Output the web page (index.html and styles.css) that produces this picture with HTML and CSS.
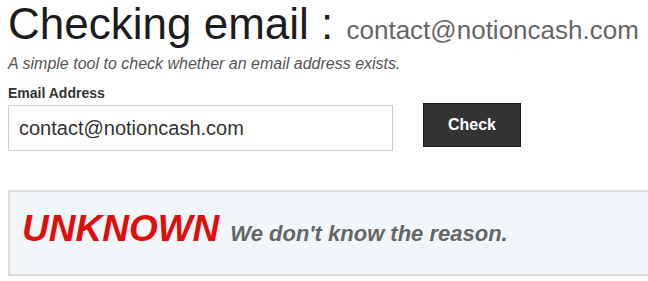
FILE: index.html
```html
<!DOCTYPE html>
<html lang="en">
<head>
<meta charset="utf-8">
<title>Checking email</title>
<link rel="stylesheet" href="styles.css">
</head>
<body>
<div class="page">
  <h1 class="title">Checking email : <span class="title-email">contact@notioncash.com</span></h1>
  <p class="subtitle">A simple tool to check whether an email address exists.</p>
  <form class="check-form">
    <label class="field-label" for="email">Email Address</label>
    <div class="field-row">
      <input class="field-input" id="email" type="text" value="contact@notioncash.com">
      <button class="check-btn" type="button">Check</button>
    </div>
  </form>
  <div class="result">
    <span class="result-status">UNKNOWN</span>
    <span class="result-reason">We don't know the reason.</span>
  </div>
</div>
</body>
</html>
```
FILE: styles.css
```css
html, body {
  margin: 0;
  padding: 0;
  overflow: hidden;
  background: #fff;
}
body {
  font-family: "Liberation Sans", Arial, sans-serif;
}
.page {
  padding-left: 8px;
  width: 700px;
}
.title {
  margin: 0;
  height: 48px;
  font-size: 44px;
  font-weight: normal;
  line-height: 48px;
  color: #1c1c1c;
  white-space: nowrap;
}
.title-email {
  font-size: 26px;
  line-height: 26px;
  color: #666;
  margin-left: 1px;
}
.subtitle {
  margin: 6px 0 0;
  font-size: 16px;
  line-height: 20px;
  font-style: italic;
  color: #555;
}
.check-form {
  margin-top: 10px;
}
.field-label {
  display: block;
  font-size: 14px;
  font-weight: bold;
  line-height: 18px;
  color: #333;
}
.field-row {
  display: flex;
  align-items: flex-start;
  gap: 30px;
  margin-top: 1px;
}
.field-input {
  box-sizing: border-box;
  width: 385px;
  height: 46px;
  margin: 2px 0 0;
  padding: 0 10px;
  border: 1px solid #ccc;
  font-family: "Liberation Sans", Arial, sans-serif;
  font-size: 20px;
  color: #333;
  background: #fff;
  outline: none;
}
.check-btn {
  box-sizing: border-box;
  width: 98px;
  height: 44px;
  margin: 0;
  padding: 0;
  border: 1px solid #1a1a1a;
  background: #333;
  color: #fff;
  font-family: "Liberation Sans", Arial, sans-serif;
  font-size: 16px;
  font-weight: bold;
}
.result {
  display: flex;
  align-items: baseline;
  gap: 11px;
  box-sizing: border-box;
  margin-top: 39px;
  width: 680px;
  height: 86px;
  padding: 16px 12px 0;
  border: 2px solid #dadada;
  background: #f0f6fa;
  white-space: nowrap;
}
.result-status {
  font-size: 37px;
  font-weight: bold;
  font-style: italic;
  color: #e00d0d;
}
.result-reason {
  font-size: 22px;
  font-weight: bold;
  font-style: italic;
  color: #666;
}
```
